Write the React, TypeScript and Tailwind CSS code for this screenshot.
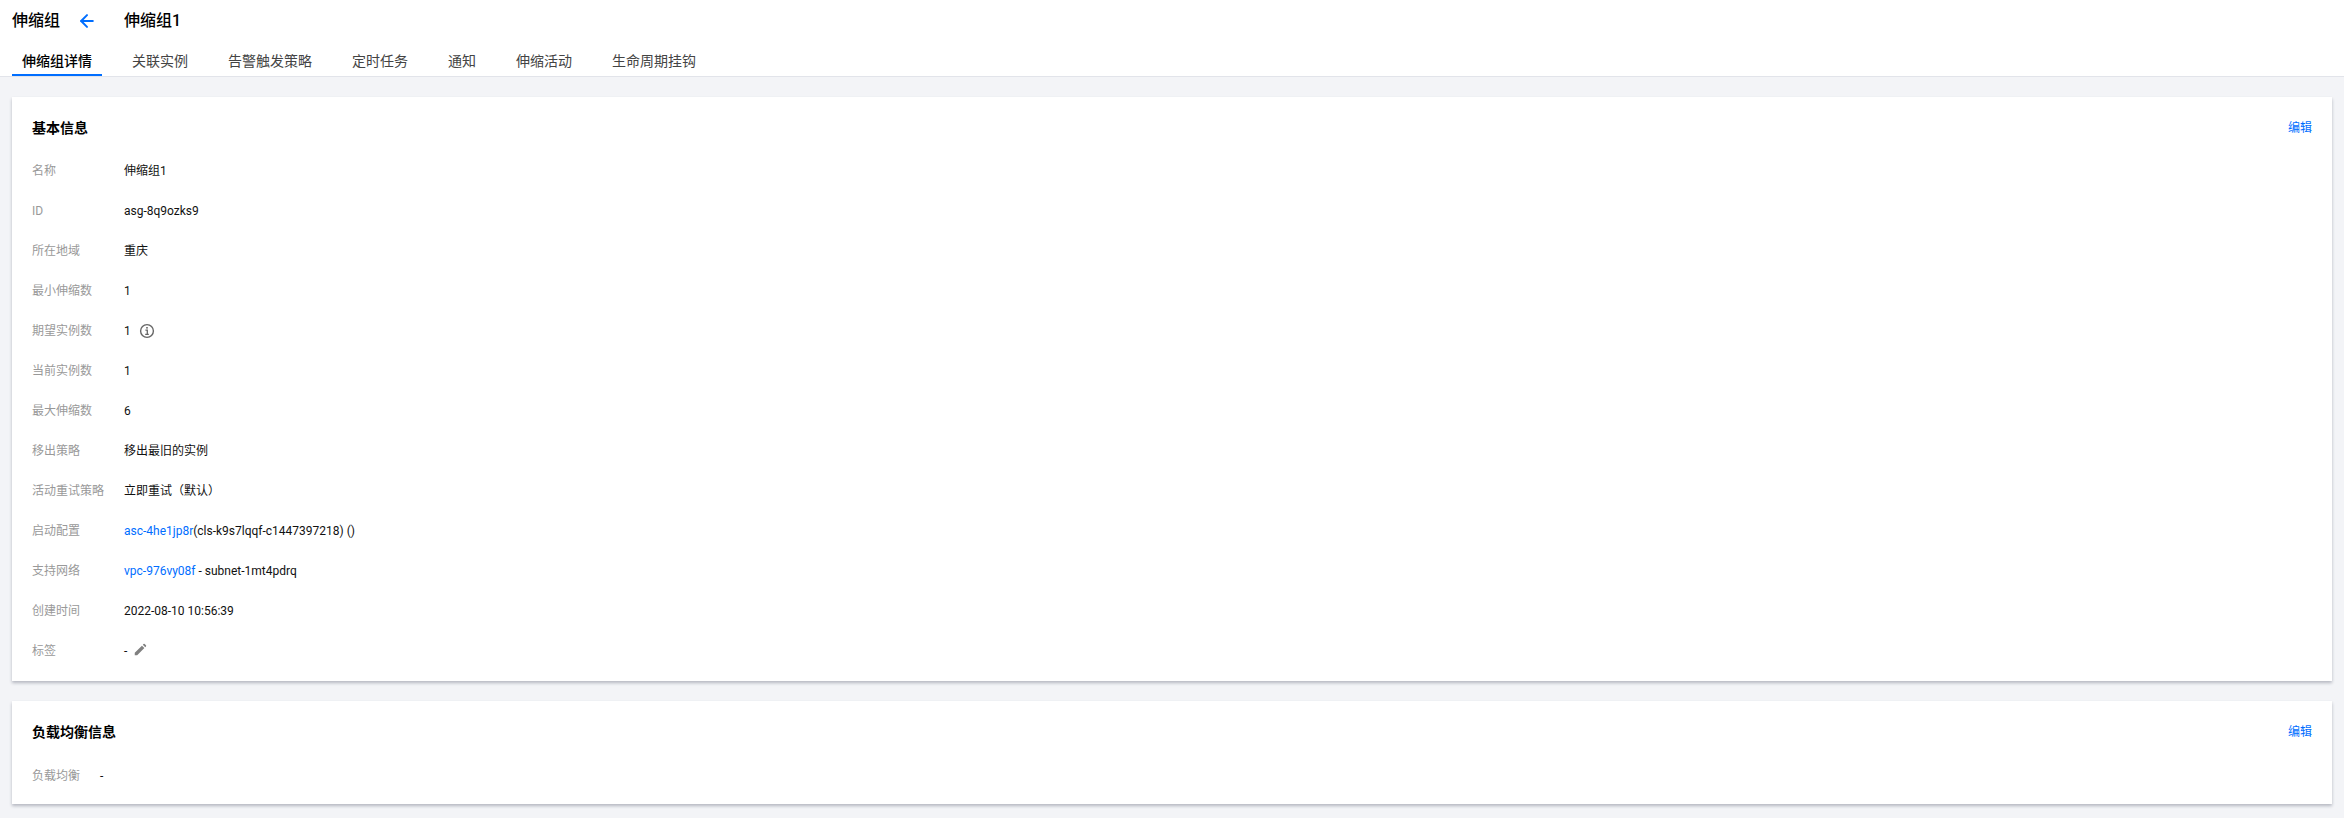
import { ArrowLeft } from "lucide-react";

const FONT = "font-['Roboto','Noto_Sans_CJK_SC',sans-serif]";

const tabs = ["伸缩组详情", "关联实例", "告警触发策略", "定时任务", "通知", "伸缩活动", "生命周期挂钩"];

const Link = ({ children }: { children: React.ReactNode }) => (
  <a className="text-[#006eff]">{children}</a>
);

const Row = ({ label, children }: { label: string; children: React.ReactNode }) => (
  <div className="flex h-10 items-center">
    <div className="w-[92px] shrink-0 text-[#999]">{label}</div>
    <div className="flex items-center text-[#111]">{children}</div>
  </div>
);

const Card = ({ title, children }: { title: string; children: React.ReactNode }) => (
  <section className="bg-white px-5 pt-5 shadow-[0_2px_3px_0_rgba(54,58,80,0.32)]">
    <div className="flex h-5 items-center justify-between">
      <h3 className="pt-px text-sm font-bold text-black">{title}</h3>
      <a className="pt-0.5 text-xs text-[#006eff]">编辑</a>
    </div>
    {children}
  </section>
);

export default function App() {
  return (
    <div className={`${FONT} h-[818px] bg-[#f3f4f7] text-xs`}>
      <header className="h-[77px] border-b border-[#e2e4ea] bg-white px-3">
        <div className="flex h-[42px] items-center">
          <h2 className="w-12 text-base font-medium text-black">伸缩组</h2>
          <ArrowLeft className="ml-[17px] h-5 w-5 text-[#006eff]" strokeWidth={2.4} />
          <span className="ml-[27px] text-base font-medium text-black">伸缩组1</span>
        </div>
        <nav className="flex h-[34px] gap-5">
          {tabs.map((t, i) => (
            <div
              key={t}
              className={
                i === 0
                  ? "flex items-center border-b-2 border-[#006eff] px-2.5 pt-1.5 text-sm font-medium text-black"
                  : "flex items-center border-b-2 border-transparent px-2.5 pt-1.5 text-sm text-[#444]"
              }
            >
              {t}
            </div>
          ))}
        </nav>
      </header>

      <main className="flex flex-col gap-5 px-3 pt-5">
        <Card title="基本信息">
          <div className="pb-2.5 pt-3.5">
            <Row label="名称">伸缩组1</Row>
            <Row label="ID">asg-8q9ozks9</Row>
            <Row label="所在地域">重庆</Row>
            <Row label="最小伸缩数">1</Row>
            <Row label="期望实例数">
              1
              <svg viewBox="0 0 16 16" className="ml-2 h-4 w-4 text-[#666]" fill="none">
                <circle cx="8" cy="8" r="6.4" stroke="currentColor" strokeWidth="1.4" />
                <rect x="7.2" y="4" width="1.6" height="1.6" fill="currentColor" />
                <path d="M6.4 7.2h1.9v3.9M6.2 11.3h3.6" stroke="currentColor" strokeWidth="1.3" />
              </svg>
            </Row>
            <Row label="当前实例数">1</Row>
            <Row label="最大伸缩数">6</Row>
            <Row label="移出策略">移出最旧的实例</Row>
            <Row label="活动重试策略">立即重试（默认）</Row>
            <Row label="启动配置">
              <span>
                <Link>asc-4he1jp8r</Link>(cls-k9s7lqqf-c1447397218) ()
              </span>
            </Row>
            <Row label="支持网络">
              <span>
                <Link>vpc-976vy08f</Link> - subnet-1mt4pdrq
              </span>
            </Row>
            <Row label="创建时间">2022-08-10 10:56:39</Row>
            <Row label="标签">
              -
              <svg viewBox="0 0 16 16" className="mb-0.5 ml-1.5 h-3.5 w-3.5 text-[#808080]" fill="currentColor">
                <path d="M2 11.2 10.2 3l2.8 2.8L4.8 14H2v-2.8ZM11.2 2l.8-.8a1 1 0 0 1 1.4 0l1.4 1.4a1 1 0 0 1 0 1.4l-.8.8L11.2 2Z" />
              </svg>
            </Row>
          </div>
        </Card>
        <Card title="负载均衡信息">
          <div className="pb-2 pt-[15px]">
            <div className="flex h-10 items-center">
              <div className="w-[68px] shrink-0 text-[#999]">负载均衡</div>
              <div className="text-[#111]">-</div>
            </div>
          </div>
        </Card>
      </main>
    </div>
  );
}
